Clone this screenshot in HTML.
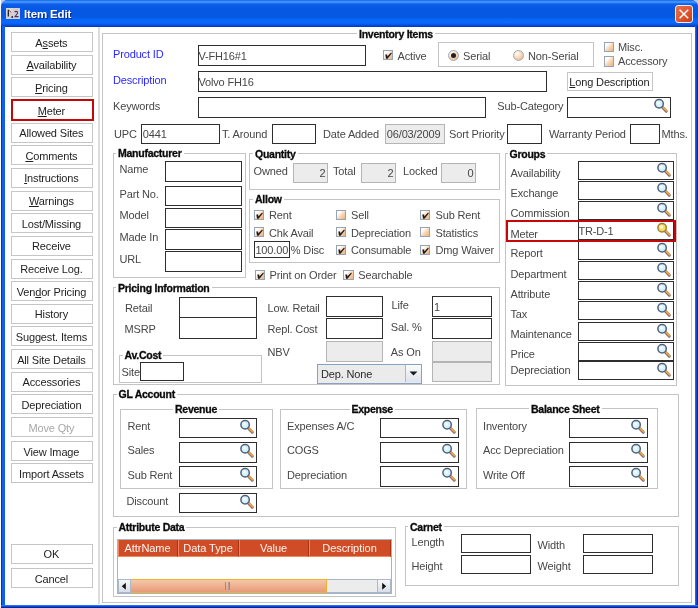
<!DOCTYPE html><html><head><meta charset="utf-8"><style>
*{box-sizing:border-box;margin:0;padding:0}
html,body{width:698px;height:608px;overflow:hidden;background:#fdfdfd;font-family:"Liberation Sans",sans-serif}
.t,.gt{position:absolute;white-space:pre;line-height:1}
#w{position:absolute;left:0;top:0;width:698px;height:608px;will-change:transform}
.gt{font-weight:bold;color:#0a0a0a;background:#fff;padding:0 2px;letter-spacing:-0.25px;-webkit-text-stroke:0.3px #0a0a0a}
.f,.fg{position:absolute;border:1px solid #2e2e2e;background:#fff;font-size:11px;line-height:1;white-space:pre;letter-spacing:-0.15px}
.fg{border:1px solid #b4b4b4;background:#ececec}
.g{position:absolute;border:1px solid #c4c4c4}
.mag{position:absolute;right:0px;top:0px}
.cb{position:absolute;width:10.4px;height:10.2px;border:1px solid #94a4b4;background:linear-gradient(135deg,#ffffff 0%,#ffffff 25%,#f8d8b8 55%,#f0b078 100%)}
.rb{position:absolute;width:11px;height:11px;border-radius:50%;border:1px solid #a0acb8;background:radial-gradient(circle at 35% 30%,#fff 0%,#f8d6b4 50%,#eea878 100%)}
.bt{position:absolute;border:1px solid #c6c6c6;background:#fff;font-size:11px;line-height:1;text-align:center;white-space:pre;letter-spacing:-0.15px}
.bt.red{border:2px solid #c40808}
u{text-decoration:underline;text-underline-offset:1px}
</style></head><body><div id="w"><div style="position:absolute;left:1px;top:0px;width:8px;height:8px;background:#b4c8f0"></div>
<div style="position:absolute;left:690px;top:0px;width:8px;height:8px;background:#b4c8f0"></div>
<div style="position:absolute;left:1px;top:0;width:697px;height:608px;background:#0a56e4;border-radius:7px 7px 0 0"></div>
<div style="position:absolute;left:1px;top:0;width:697px;height:27px;border-radius:7px 7px 0 0;background:linear-gradient(to bottom,#0a4cdc 0px,#3d95ff 1px,#3a8ffc 2.5px,#1a6cf2 3.5px,#0a5ae6 5px,#0558e2 10px,#0558e2 17px,#0866f8 20px,#0a68fa 23px,#0850e0 25px,#003cc4 26.5px)"></div>
<div style="position:absolute;left:1px;top:26px;width:1px;height:582px;background:#0a2cc8"></div>
<div style="position:absolute;left:2px;top:26px;width:3px;height:582px;background:#1060ee"></div>
<div style="position:absolute;left:694.7px;top:26px;width:1.3px;height:582px;background:#1a64f0"></div>
<div style="position:absolute;left:696px;top:26px;width:1px;height:582px;background:#0a48d8"></div>
<div style="position:absolute;left:697px;top:26px;width:1px;height:582px;background:#0022a8"></div>
<div style="position:absolute;left:1px;top:605px;width:697px;height:1px;background:#2a74f4"></div>
<div style="position:absolute;left:1px;top:606px;width:697px;height:1px;background:#0a48d8"></div>
<div style="position:absolute;left:1px;top:607px;width:697px;height:1px;background:#0026b0"></div>
<div style="position:absolute;left:5px;top:26.5px;width:689.7px;height:578.5px;background:#fff"></div>
<svg width="14" height="11" viewBox="0 0 14 11" style="position:absolute;left:6px;top:8px"><rect x="0" y="0" width="14" height="11" fill="#d6ccd4"/><rect x="0" y="0" width="7" height="5" fill="#dcd8cc"/><rect x="7" y="5" width="7" height="6" fill="#cdd4dc"/><path d="M2.3 1.8 V8.5" stroke="#141414" stroke-width="1.2"/><path d="M3.5 2.5 L5 4.5" stroke="#705060" stroke-width="1"/><circle cx="6.2" cy="9" r="0.9" fill="#202034"/><path d="M8.6 4.2 Q10 2.6 11.5 4 Q12 5.4 10.2 7 L9 8.6 H12.6" fill="none" stroke="#603048" stroke-width="1.1"/></svg>
<div class="t" style="left:24px;top:8.97px;font-size:11.5px;color:#fff;letter-spacing:-0.15px;font-weight:bold;text-shadow:1px 1px 0 #0a2a90;">Item Edit</div>
<div style="position:absolute;left:675px;top:5px;width:18px;height:18px;border:1px solid #e8eefa;border-radius:3px;background:linear-gradient(135deg,#e8704c 0%,#e05830 50%,#c83c14 100%)"><svg width="16" height="16" viewBox="0 0 16 16" style="position:absolute;left:0;top:0"><path d="M3.6 3.8 L12.2 12.2 M12.2 3.8 L3.6 12.2" stroke="#fff" stroke-width="1.5"/></svg></div>
<div style="position:absolute;left:98px;top:26.5px;width:1.8px;height:577.5px;background:#dcdcdc"></div>
<div class="bt" style="left:11px;top:32.0px;width:82px;height:20px;color:#1e1e1e"><span style="position:absolute;left:-0.6px;right:0.6px;top:4.59px">A<u>s</u>sets</span></div>
<div class="bt" style="left:11px;top:54.65px;width:82px;height:20px;color:#1e1e1e"><span style="position:absolute;left:-0.6px;right:0.6px;top:4.59px"><u>A</u>vailability</span></div>
<div class="bt" style="left:11px;top:77.3px;width:82px;height:20px;color:#1e1e1e"><span style="position:absolute;left:-0.6px;right:0.6px;top:4.59px"><u>P</u>ricing</span></div>
<div class="bt red" style="left:10.5px;top:99px;width:83px;height:22px;color:#1e1e1e"><span style="position:absolute;left:-0.6px;right:0.6px;top:5.19px"><u>M</u>eter</span></div>
<div class="bt" style="left:11px;top:122.6px;width:82px;height:20px;color:#1e1e1e"><span style="position:absolute;left:-0.6px;right:0.6px;top:4.59px">Allowed Sites</span></div>
<div class="bt" style="left:11px;top:145.25px;width:82px;height:20px;color:#1e1e1e"><span style="position:absolute;left:-0.6px;right:0.6px;top:4.59px"><u>C</u>omments</span></div>
<div class="bt" style="left:11px;top:167.9px;width:82px;height:20px;color:#1e1e1e"><span style="position:absolute;left:-0.6px;right:0.6px;top:4.59px"><u>I</u>nstructions</span></div>
<div class="bt" style="left:11px;top:190.55px;width:82px;height:20px;color:#1e1e1e"><span style="position:absolute;left:-0.6px;right:0.6px;top:4.59px"><u>W</u>arnings</span></div>
<div class="bt" style="left:11px;top:213.2px;width:82px;height:20px;color:#1e1e1e"><span style="position:absolute;left:-0.6px;right:0.6px;top:4.59px">Lost/Missing</span></div>
<div class="bt" style="left:11px;top:235.85px;width:82px;height:20px;color:#1e1e1e"><span style="position:absolute;left:-0.6px;right:0.6px;top:4.59px">Receive</span></div>
<div class="bt" style="left:11px;top:258.5px;width:82px;height:20px;color:#1e1e1e"><span style="position:absolute;left:-0.6px;right:0.6px;top:4.59px">Receive Log.</span></div>
<div class="bt" style="left:11px;top:281.15px;width:82px;height:20px;color:#1e1e1e"><span style="position:absolute;left:-0.6px;right:0.6px;top:4.59px">Ven<u>d</u>or Pricing</span></div>
<div class="bt" style="left:11px;top:303.8px;width:82px;height:20px;color:#1e1e1e"><span style="position:absolute;left:-0.6px;right:0.6px;top:4.59px">History</span></div>
<div class="bt" style="left:11px;top:326.45px;width:82px;height:20px;color:#1e1e1e"><span style="position:absolute;left:-0.6px;right:0.6px;top:4.59px">Suggest. Items</span></div>
<div class="bt" style="left:11px;top:349.1px;width:82px;height:20px;color:#1e1e1e"><span style="position:absolute;left:-0.6px;right:0.6px;top:4.59px">All Site Details</span></div>
<div class="bt" style="left:11px;top:371.75px;width:82px;height:20px;color:#1e1e1e"><span style="position:absolute;left:-0.6px;right:0.6px;top:4.59px">Accessories</span></div>
<div class="bt" style="left:11px;top:394.4px;width:82px;height:20px;color:#1e1e1e"><span style="position:absolute;left:-0.6px;right:0.6px;top:4.59px">Depreciation</span></div>
<div class="bt" style="left:11px;top:417.05px;width:82px;height:20px;color:#a8a8a8"><span style="position:absolute;left:-0.6px;right:0.6px;top:4.59px">Move Qty</span></div>
<div class="bt" style="left:11px;top:441px;width:82px;height:20px;color:#1e1e1e"><span style="position:absolute;left:-0.6px;right:0.6px;top:4.59px">View Image</span></div>
<div class="bt" style="left:11px;top:463.3px;width:82px;height:20px;color:#1e1e1e"><span style="position:absolute;left:-0.6px;right:0.6px;top:4.59px">Import Assets</span></div>
<div class="bt" style="left:11px;top:543.7px;width:82px;height:20px;color:#1e1e1e"><span style="position:absolute;left:-0.6px;right:0.6px;top:4.59px">OK</span></div>
<div class="bt" style="left:11px;top:568px;width:82px;height:20px;color:#1e1e1e"><span style="position:absolute;left:-0.6px;right:0.6px;top:4.59px">Cancel</span></div>
<div class="g" style="left:102px;top:33px;width:590px;height:570px"></div>
<div class="gt" style="left:357px;top:28.51px;font-size:10.5px">Inventory Items</div>
<div class="t" style="left:113px;top:48.59px;font-size:11px;color:#2a2aff;letter-spacing:-0.15px;">Product ID</div>
<div class="f" style="left:198px;top:45px;width:168px;height:21px"><span style="position:absolute;left:-0.6px;top:5.1px;color:#474747">V-FH16#1</span></div>
<div class="cb" style="left:383px;top:50px"><svg width="10.4" height="10.2" viewBox="0 0 10.4 10.2" style="position:absolute;left:-1px;top:-1px"><path d="M2.3 4.5 L4.1 4.5 L4.4 6.5 L8.1 2.6 L8.8 3.6 L4.5 8.7 L3.1 8.7 Z" fill="#1a1a1a"/></svg></div>
<div class="t" style="left:397.5px;top:51.09px;font-size:11px;color:#474747;letter-spacing:-0.15px;">Active</div>
<div class="g" style="left:438px;top:41.5px;width:156px;height:25px"></div>
<div class="rb" style="left:447.7px;top:50.4px"><div style="position:absolute;left:2.5px;top:2px;width:5px;height:5px;border-radius:50%;background:#202020"></div></div>
<div class="t" style="left:463px;top:51.09px;font-size:11px;color:#474747;letter-spacing:-0.15px;">Serial</div>
<div class="rb" style="left:512.9px;top:50.4px"></div>
<div class="t" style="left:528px;top:51.09px;font-size:11px;color:#474747;letter-spacing:-0.15px;">Non-Serial</div>
<div class="cb" style="left:603.5px;top:42.3px"></div>
<div class="t" style="left:618px;top:42.19px;font-size:11px;color:#474747;letter-spacing:-0.15px;">Misc.</div>
<div class="cb" style="left:603.5px;top:56.4px"></div>
<div class="t" style="left:618px;top:55.69px;font-size:11px;color:#474747;letter-spacing:-0.15px;">Accessory</div>
<div class="t" style="left:113px;top:74.59px;font-size:11px;color:#2a2aff;letter-spacing:-0.15px;">Description</div>
<div class="f" style="left:198px;top:71px;width:349px;height:21px"><span style="position:absolute;left:-0.6px;top:5.1px;color:#474747">Volvo FH16</span></div>
<div class="bt" style="left:567px;top:71.5px;width:86px;height:19.7px;color:#1e1e1e"><span style="position:absolute;left:-0.6px;right:0.6px;top:4.59px"><u>L</u>ong Description</span></div>
<div class="t" style="left:113px;top:101.09px;font-size:11px;color:#474747;letter-spacing:-0.15px;">Keywords</div>
<div class="f" style="left:198px;top:97.2px;width:288px;height:20.7px"></div>
<div class="t" style="left:497.3px;top:101.19px;font-size:11px;color:#474747;letter-spacing:-0.15px;">Sub-Category</div>
<div class="f" style="left:567px;top:97px;width:104px;height:21px"><svg class="mag" width="16" height="16" viewBox="0 0 16 16"><line x1="8.2" y1="9" x2="12.3" y2="13.2" stroke="#7a6a78" stroke-width="3" stroke-linecap="round"/><line x1="8.8" y1="9" x2="12.7" y2="12.9" stroke="#f2a444" stroke-width="1.8" stroke-linecap="round"/><circle cx="5.1" cy="5.8" r="4.2" fill="#d4f2fc" stroke="#52607a" stroke-width="1.5"/><circle cx="4.5" cy="5" r="1.8" fill="#f0fbff"/></svg></div>
<div class="t" style="left:114px;top:128.59px;font-size:11px;color:#474747;letter-spacing:-0.15px;">UPC</div>
<div class="f" style="left:141px;top:123.5px;width:79px;height:20.5px"><span style="position:absolute;left:0.8px;top:4.8px;color:#474747">0441</span></div>
<div class="t" style="left:222px;top:128.59px;font-size:11px;color:#474747;letter-spacing:-0.15px;">T. Around</div>
<div class="f" style="left:272px;top:123.5px;width:44px;height:20.5px"></div>
<div class="t" style="left:323px;top:128.59px;font-size:11px;color:#474747;letter-spacing:-0.15px;">Date Added</div>
<div class="fg" style="left:385px;top:123.5px;width:60px;height:20.5px"><span style="position:absolute;left:0.8px;top:4.8px;color:#474747">06/03/2009</span></div>
<div class="t" style="left:449px;top:128.59px;font-size:11px;color:#474747;letter-spacing:-0.15px;">Sort Priority</div>
<div class="f" style="left:507px;top:123.5px;width:35px;height:20.5px"></div>
<div class="t" style="left:549px;top:128.59px;font-size:11px;color:#474747;letter-spacing:-0.15px;">Warranty Period</div>
<div class="f" style="left:629.5px;top:123.5px;width:30.5px;height:20.5px"></div>
<div class="t" style="left:661.5px;top:128.69px;font-size:11px;color:#474747;letter-spacing:-0.15px;">Mths.</div>
<div class="g" style="left:112.6px;top:152.6px;width:133.2px;height:125px"></div>
<div class="gt" style="left:116px;top:148.11px;font-size:10.5px">Manufacturer</div>
<div class="t" style="left:119.5px;top:163.69px;font-size:11px;color:#474747;letter-spacing:-0.15px;">Name</div>
<div class="f" style="left:165px;top:161px;width:77px;height:20.5px"></div>
<div class="t" style="left:119.5px;top:188.69px;font-size:11px;color:#474747;letter-spacing:-0.15px;">Part No.</div>
<div class="f" style="left:165px;top:185.5px;width:77px;height:20.5px"></div>
<div class="t" style="left:119.5px;top:209.69px;font-size:11px;color:#474747;letter-spacing:-0.15px;">Model</div>
<div class="f" style="left:165px;top:207.5px;width:77px;height:20.5px"></div>
<div class="t" style="left:119.5px;top:231.69px;font-size:11px;color:#474747;letter-spacing:-0.15px;">Made In</div>
<div class="f" style="left:165px;top:229px;width:77px;height:20.5px"></div>
<div class="t" style="left:119.5px;top:253.69px;font-size:11px;color:#474747;letter-spacing:-0.15px;">URL</div>
<div class="f" style="left:165px;top:251px;width:77px;height:20.5px"></div>
<div class="g" style="left:249.4px;top:153.4px;width:250.6px;height:37px"></div>
<div class="gt" style="left:253px;top:148.91px;font-size:10.5px">Quantity</div>
<div class="t" style="left:253.5px;top:165.69px;font-size:11px;color:#474747;letter-spacing:-0.15px;">Owned</div>
<div class="fg" style="left:293px;top:162.7px;width:35px;height:20.5px"><span style="position:absolute;right:1.5px;top:4.8px;color:#474747">2</span></div>
<div class="t" style="left:333px;top:165.69px;font-size:11px;color:#474747;letter-spacing:-0.15px;">Total</div>
<div class="fg" style="left:361px;top:162.7px;width:35px;height:20.5px"><span style="position:absolute;right:1.5px;top:4.8px;color:#474747">2</span></div>
<div class="t" style="left:403px;top:165.69px;font-size:11px;color:#474747;letter-spacing:-0.15px;">Locked</div>
<div class="fg" style="left:441px;top:162.7px;width:35px;height:20.5px"><span style="position:absolute;right:1.5px;top:4.8px;color:#474747">0</span></div>
<div class="g" style="left:249.4px;top:198.5px;width:250.8px;height:64px"></div>
<div class="gt" style="left:253px;top:194.01px;font-size:10.5px">Allow</div>
<div class="cb" style="left:253.7px;top:209.6px"><svg width="10.4" height="10.2" viewBox="0 0 10.4 10.2" style="position:absolute;left:-1px;top:-1px"><path d="M2.3 4.5 L4.1 4.5 L4.4 6.5 L8.1 2.6 L8.8 3.6 L4.5 8.7 L3.1 8.7 Z" fill="#1a1a1a"/></svg></div>
<div class="t" style="left:269px;top:210.19px;font-size:11px;color:#474747;letter-spacing:-0.15px;">Rent</div>
<div class="cb" style="left:336px;top:209.6px"></div>
<div class="t" style="left:351px;top:210.19px;font-size:11px;color:#474747;letter-spacing:-0.15px;">Sell</div>
<div class="cb" style="left:420px;top:209.6px"><svg width="10.4" height="10.2" viewBox="0 0 10.4 10.2" style="position:absolute;left:-1px;top:-1px"><path d="M2.3 4.5 L4.1 4.5 L4.4 6.5 L8.1 2.6 L8.8 3.6 L4.5 8.7 L3.1 8.7 Z" fill="#1a1a1a"/></svg></div>
<div class="t" style="left:435.5px;top:210.19px;font-size:11px;color:#474747;letter-spacing:-0.15px;">Sub Rent</div>
<div class="cb" style="left:253.7px;top:227.2px"><svg width="10.4" height="10.2" viewBox="0 0 10.4 10.2" style="position:absolute;left:-1px;top:-1px"><path d="M2.3 4.5 L4.1 4.5 L4.4 6.5 L8.1 2.6 L8.8 3.6 L4.5 8.7 L3.1 8.7 Z" fill="#1a1a1a"/></svg></div>
<div class="t" style="left:269px;top:227.69px;font-size:11px;color:#474747;letter-spacing:-0.15px;">Chk Avail</div>
<div class="cb" style="left:336px;top:227.2px"><svg width="10.4" height="10.2" viewBox="0 0 10.4 10.2" style="position:absolute;left:-1px;top:-1px"><path d="M2.3 4.5 L4.1 4.5 L4.4 6.5 L8.1 2.6 L8.8 3.6 L4.5 8.7 L3.1 8.7 Z" fill="#1a1a1a"/></svg></div>
<div class="t" style="left:351px;top:227.69px;font-size:11px;color:#474747;letter-spacing:-0.15px;">Depreciation</div>
<div class="cb" style="left:420px;top:227.2px"></div>
<div class="t" style="left:435.5px;top:227.69px;font-size:11px;color:#474747;letter-spacing:-0.15px;">Statistics</div>
<div class="f" style="left:253.6px;top:241px;width:36.6px;height:17px"><span style="position:absolute;left:0.8px;top:3.1px;color:#474747">100.00</span></div>
<div class="t" style="left:290.8px;top:245.49px;font-size:11px;color:#474747;letter-spacing:-0.15px;">% Disc</div>
<div class="cb" style="left:336px;top:244.8px"><svg width="10.4" height="10.2" viewBox="0 0 10.4 10.2" style="position:absolute;left:-1px;top:-1px"><path d="M2.3 4.5 L4.1 4.5 L4.4 6.5 L8.1 2.6 L8.8 3.6 L4.5 8.7 L3.1 8.7 Z" fill="#1a1a1a"/></svg></div>
<div class="t" style="left:351px;top:245.19px;font-size:11px;color:#474747;letter-spacing:-0.15px;">Consumable</div>
<div class="cb" style="left:420px;top:244.8px"><svg width="10.4" height="10.2" viewBox="0 0 10.4 10.2" style="position:absolute;left:-1px;top:-1px"><path d="M2.3 4.5 L4.1 4.5 L4.4 6.5 L8.1 2.6 L8.8 3.6 L4.5 8.7 L3.1 8.7 Z" fill="#1a1a1a"/></svg></div>
<div class="t" style="left:435.5px;top:245.19px;font-size:11px;color:#474747;letter-spacing:-0.15px;">Dmg Waiver</div>
<div class="cb" style="left:255px;top:270px"><svg width="10.4" height="10.2" viewBox="0 0 10.4 10.2" style="position:absolute;left:-1px;top:-1px"><path d="M2.3 4.5 L4.1 4.5 L4.4 6.5 L8.1 2.6 L8.8 3.6 L4.5 8.7 L3.1 8.7 Z" fill="#1a1a1a"/></svg></div>
<div class="t" style="left:269.5px;top:269.69px;font-size:11px;color:#474747;letter-spacing:-0.15px;">Print on Order</div>
<div class="cb" style="left:343.3px;top:270px"><svg width="10.4" height="10.2" viewBox="0 0 10.4 10.2" style="position:absolute;left:-1px;top:-1px"><path d="M2.3 4.5 L4.1 4.5 L4.4 6.5 L8.1 2.6 L8.8 3.6 L4.5 8.7 L3.1 8.7 Z" fill="#1a1a1a"/></svg></div>
<div class="t" style="left:358.3px;top:269.89px;font-size:11px;color:#474747;letter-spacing:-0.15px;">Searchable</div>
<div class="g" style="left:504.8px;top:153px;width:172.3px;height:233px"></div>
<div class="gt" style="left:507.5px;top:148.51px;font-size:10.5px">Groups</div>
<div class="t" style="left:510.5px;top:167.89px;font-size:11px;color:#474747;letter-spacing:-0.15px;">Availability</div>
<div class="f" style="left:578px;top:161.0px;width:96px;height:19px"><svg class="mag" width="16" height="16" viewBox="0 0 16 16"><line x1="8.2" y1="9" x2="12.3" y2="13.2" stroke="#7a6a78" stroke-width="3" stroke-linecap="round"/><line x1="8.8" y1="9" x2="12.7" y2="12.9" stroke="#f2a444" stroke-width="1.8" stroke-linecap="round"/><circle cx="5.1" cy="5.8" r="4.2" fill="#d4f2fc" stroke="#52607a" stroke-width="1.5"/><circle cx="4.5" cy="5" r="1.8" fill="#f0fbff"/></svg></div>
<div class="t" style="left:510.5px;top:188.02px;font-size:11px;color:#474747;letter-spacing:-0.15px;">Exchange</div>
<div class="f" style="left:578px;top:181.07px;width:96px;height:19px"><svg class="mag" width="16" height="16" viewBox="0 0 16 16"><line x1="8.2" y1="9" x2="12.3" y2="13.2" stroke="#7a6a78" stroke-width="3" stroke-linecap="round"/><line x1="8.8" y1="9" x2="12.7" y2="12.9" stroke="#f2a444" stroke-width="1.8" stroke-linecap="round"/><circle cx="5.1" cy="5.8" r="4.2" fill="#d4f2fc" stroke="#52607a" stroke-width="1.5"/><circle cx="4.5" cy="5" r="1.8" fill="#f0fbff"/></svg></div>
<div class="t" style="left:510.5px;top:208.15px;font-size:11px;color:#474747;letter-spacing:-0.15px;">Commission</div>
<div class="f" style="left:578px;top:201.14px;width:96px;height:19px"><svg class="mag" width="16" height="16" viewBox="0 0 16 16"><line x1="8.2" y1="9" x2="12.3" y2="13.2" stroke="#7a6a78" stroke-width="3" stroke-linecap="round"/><line x1="8.8" y1="9" x2="12.7" y2="12.9" stroke="#f2a444" stroke-width="1.8" stroke-linecap="round"/><circle cx="5.1" cy="5.8" r="4.2" fill="#d4f2fc" stroke="#52607a" stroke-width="1.5"/><circle cx="4.5" cy="5" r="1.8" fill="#f0fbff"/></svg></div>
<div class="t" style="left:510.5px;top:229.08px;font-size:11px;color:#474747;letter-spacing:-0.15px;">Meter</div>
<div class="f" style="left:578px;top:221.21px;width:96px;height:19px"><span style="position:absolute;left:-0.6px;top:4.1px;color:#474747">TR-D-1</span><svg class="mag" width="16" height="16" viewBox="0 0 16 16"><line x1="8.2" y1="9" x2="12.3" y2="13.2" stroke="#7a6a78" stroke-width="3" stroke-linecap="round"/><line x1="8.8" y1="9" x2="12.7" y2="12.9" stroke="#f2a444" stroke-width="1.8" stroke-linecap="round"/><circle cx="5.1" cy="5.8" r="4.2" fill="#f4dc70" stroke="#a08030" stroke-width="1.5"/><circle cx="4.5" cy="5" r="1.8" fill="#fff8c0"/></svg></div>
<div class="t" style="left:510.5px;top:248.41px;font-size:11px;color:#474747;letter-spacing:-0.15px;">Report</div>
<div class="f" style="left:578px;top:241.28px;width:96px;height:19px"><svg class="mag" width="16" height="16" viewBox="0 0 16 16"><line x1="8.2" y1="9" x2="12.3" y2="13.2" stroke="#7a6a78" stroke-width="3" stroke-linecap="round"/><line x1="8.8" y1="9" x2="12.7" y2="12.9" stroke="#f2a444" stroke-width="1.8" stroke-linecap="round"/><circle cx="5.1" cy="5.8" r="4.2" fill="#d4f2fc" stroke="#52607a" stroke-width="1.5"/><circle cx="4.5" cy="5" r="1.8" fill="#f0fbff"/></svg></div>
<div class="t" style="left:510.5px;top:268.54px;font-size:11px;color:#474747;letter-spacing:-0.15px;">Department</div>
<div class="f" style="left:578px;top:261.35px;width:96px;height:19px"><svg class="mag" width="16" height="16" viewBox="0 0 16 16"><line x1="8.2" y1="9" x2="12.3" y2="13.2" stroke="#7a6a78" stroke-width="3" stroke-linecap="round"/><line x1="8.8" y1="9" x2="12.7" y2="12.9" stroke="#f2a444" stroke-width="1.8" stroke-linecap="round"/><circle cx="5.1" cy="5.8" r="4.2" fill="#d4f2fc" stroke="#52607a" stroke-width="1.5"/><circle cx="4.5" cy="5" r="1.8" fill="#f0fbff"/></svg></div>
<div class="t" style="left:510.5px;top:288.67px;font-size:11px;color:#474747;letter-spacing:-0.15px;">Attribute</div>
<div class="f" style="left:578px;top:281.42px;width:96px;height:19px"><svg class="mag" width="16" height="16" viewBox="0 0 16 16"><line x1="8.2" y1="9" x2="12.3" y2="13.2" stroke="#7a6a78" stroke-width="3" stroke-linecap="round"/><line x1="8.8" y1="9" x2="12.7" y2="12.9" stroke="#f2a444" stroke-width="1.8" stroke-linecap="round"/><circle cx="5.1" cy="5.8" r="4.2" fill="#d4f2fc" stroke="#52607a" stroke-width="1.5"/><circle cx="4.5" cy="5" r="1.8" fill="#f0fbff"/></svg></div>
<div class="t" style="left:510.5px;top:308.80px;font-size:11px;color:#474747;letter-spacing:-0.15px;">Tax</div>
<div class="f" style="left:578px;top:301.49px;width:96px;height:19px"><svg class="mag" width="16" height="16" viewBox="0 0 16 16"><line x1="8.2" y1="9" x2="12.3" y2="13.2" stroke="#7a6a78" stroke-width="3" stroke-linecap="round"/><line x1="8.8" y1="9" x2="12.7" y2="12.9" stroke="#f2a444" stroke-width="1.8" stroke-linecap="round"/><circle cx="5.1" cy="5.8" r="4.2" fill="#d4f2fc" stroke="#52607a" stroke-width="1.5"/><circle cx="4.5" cy="5" r="1.8" fill="#f0fbff"/></svg></div>
<div class="t" style="left:510.5px;top:328.93px;font-size:11px;color:#474747;letter-spacing:-0.15px;">Maintenance</div>
<div class="f" style="left:578px;top:321.56px;width:96px;height:19px"><svg class="mag" width="16" height="16" viewBox="0 0 16 16"><line x1="8.2" y1="9" x2="12.3" y2="13.2" stroke="#7a6a78" stroke-width="3" stroke-linecap="round"/><line x1="8.8" y1="9" x2="12.7" y2="12.9" stroke="#f2a444" stroke-width="1.8" stroke-linecap="round"/><circle cx="5.1" cy="5.8" r="4.2" fill="#d4f2fc" stroke="#52607a" stroke-width="1.5"/><circle cx="4.5" cy="5" r="1.8" fill="#f0fbff"/></svg></div>
<div class="t" style="left:510.5px;top:349.06px;font-size:11px;color:#474747;letter-spacing:-0.15px;">Price</div>
<div class="f" style="left:578px;top:341.63px;width:96px;height:19px"><svg class="mag" width="16" height="16" viewBox="0 0 16 16"><line x1="8.2" y1="9" x2="12.3" y2="13.2" stroke="#7a6a78" stroke-width="3" stroke-linecap="round"/><line x1="8.8" y1="9" x2="12.7" y2="12.9" stroke="#f2a444" stroke-width="1.8" stroke-linecap="round"/><circle cx="5.1" cy="5.8" r="4.2" fill="#d4f2fc" stroke="#52607a" stroke-width="1.5"/><circle cx="4.5" cy="5" r="1.8" fill="#f0fbff"/></svg></div>
<div class="t" style="left:510.5px;top:365.09px;font-size:11px;color:#474747;letter-spacing:-0.15px;">Depreciation</div>
<div class="f" style="left:578px;top:360.7px;width:96px;height:19px"><svg class="mag" width="16" height="16" viewBox="0 0 16 16"><line x1="8.2" y1="9" x2="12.3" y2="13.2" stroke="#7a6a78" stroke-width="3" stroke-linecap="round"/><line x1="8.8" y1="9" x2="12.7" y2="12.9" stroke="#f2a444" stroke-width="1.8" stroke-linecap="round"/><circle cx="5.1" cy="5.8" r="4.2" fill="#d4f2fc" stroke="#52607a" stroke-width="1.5"/><circle cx="4.5" cy="5" r="1.8" fill="#f0fbff"/></svg></div>
<div style="position:absolute;left:506.2px;top:219.8px;width:169.6px;height:21.9px;border:2px solid #c40808"></div>
<div class="g" style="left:113px;top:287.2px;width:387px;height:97.8px"></div>
<div class="gt" style="left:116px;top:282.71px;font-size:10.5px">Pricing Information</div>
<div class="t" style="left:125px;top:302.69px;font-size:11px;color:#474747;letter-spacing:-0.15px;">Retail</div>
<div class="f" style="left:179px;top:296.5px;width:78px;height:21px"></div>
<div class="t" style="left:124.5px;top:323.69px;font-size:11px;color:#474747;letter-spacing:-0.15px;">MSRP</div>
<div class="f" style="left:179px;top:317.4px;width:78px;height:21.5px"></div>
<div class="g" style="left:119px;top:354.9px;width:143.3px;height:27.8px"></div>
<div class="gt" style="left:122.5px;top:350.41px;font-size:10.5px">Av.Cost</div>
<div class="t" style="left:121.5px;top:366.69px;font-size:11px;color:#474747;letter-spacing:-0.15px;">Site</div>
<div class="f" style="left:140px;top:362px;width:44px;height:19px"></div>
<div class="t" style="left:267.5px;top:302.89px;font-size:11px;color:#474747;letter-spacing:-0.15px;">Low. Retail</div>
<div class="f" style="left:326px;top:296px;width:57px;height:21px"></div>
<div class="t" style="left:267.5px;top:324.29px;font-size:11px;color:#474747;letter-spacing:-0.15px;">Repl. Cost</div>
<div class="f" style="left:326px;top:318px;width:57px;height:21px"></div>
<div class="t" style="left:267.5px;top:347.09px;font-size:11px;color:#474747;letter-spacing:-0.15px;">NBV</div>
<div class="fg" style="left:326px;top:341px;width:57px;height:21px"></div>
<div class="t" style="left:391.5px;top:299.69px;font-size:11px;color:#474747;letter-spacing:-0.15px;">Life</div>
<div class="f" style="left:432.2px;top:296px;width:59.8px;height:21px"><span style="position:absolute;left:0.8px;top:5.1px;color:#474747">1</span></div>
<div class="t" style="left:390.8px;top:321.69px;font-size:11px;color:#474747;letter-spacing:-0.15px;">Sal. %</div>
<div class="f" style="left:432.2px;top:318px;width:59.8px;height:21px"></div>
<div class="t" style="left:390.8px;top:346.99px;font-size:11px;color:#474747;letter-spacing:-0.15px;">As On</div>
<div class="fg" style="left:432.2px;top:341px;width:59.8px;height:21px"></div>
<div class="fg" style="left:432.2px;top:361.5px;width:59.8px;height:20px"></div>
<div style="position:absolute;left:317px;top:364px;width:104.5px;height:19.7px;border:1px solid #8aa0c0;background:#ebebeb"><span class="t" style="left:3px;top:3.5px;font-size:11px;color:#2a2a2a;letter-spacing:-0.15px">Dep. None</span><div style="position:absolute;right:0;top:0;width:16px;height:17px;border-left:1px solid #a8b8d0;background:linear-gradient(#fafafa,#dde3ec)"><svg width="15" height="17" viewBox="0 0 15 17" style="position:absolute;left:0;top:0"><path d="M3.5 6.5 L11.5 6.5 L7.5 10.5 Z" fill="#1a1a1a"/></svg></div></div>
<div class="g" style="left:113px;top:393.8px;width:565.8px;height:123.6px"></div>
<div class="gt" style="left:116.5px;top:389.31px;font-size:10.5px">GL Account</div>
<div class="g" style="left:120.3px;top:408.7px;width:152.4px;height:80.3px"></div>
<div class="gt" style="left:173px;top:404.21px;font-size:10.5px">Revenue</div>
<div class="t" style="left:127.5px;top:421.09px;font-size:11px;color:#474747;letter-spacing:-0.15px;">Rent</div>
<div class="f" style="left:178.7px;top:417.9px;width:78.5px;height:20.5px"><svg class="mag" width="16" height="16" viewBox="0 0 16 16"><line x1="8.2" y1="9" x2="12.3" y2="13.2" stroke="#7a6a78" stroke-width="3" stroke-linecap="round"/><line x1="8.8" y1="9" x2="12.7" y2="12.9" stroke="#f2a444" stroke-width="1.8" stroke-linecap="round"/><circle cx="5.1" cy="5.8" r="4.2" fill="#d4f2fc" stroke="#52607a" stroke-width="1.5"/><circle cx="4.5" cy="5" r="1.8" fill="#f0fbff"/></svg></div>
<div class="t" style="left:127.5px;top:445.19px;font-size:11px;color:#474747;letter-spacing:-0.15px;">Sales</div>
<div class="f" style="left:178.7px;top:442px;width:78.5px;height:20.5px"><svg class="mag" width="16" height="16" viewBox="0 0 16 16"><line x1="8.2" y1="9" x2="12.3" y2="13.2" stroke="#7a6a78" stroke-width="3" stroke-linecap="round"/><line x1="8.8" y1="9" x2="12.7" y2="12.9" stroke="#f2a444" stroke-width="1.8" stroke-linecap="round"/><circle cx="5.1" cy="5.8" r="4.2" fill="#d4f2fc" stroke="#52607a" stroke-width="1.5"/><circle cx="4.5" cy="5" r="1.8" fill="#f0fbff"/></svg></div>
<div class="t" style="left:127.5px;top:469.59px;font-size:11px;color:#474747;letter-spacing:-0.15px;">Sub Rent</div>
<div class="f" style="left:178.7px;top:466.4px;width:78.5px;height:20.5px"><svg class="mag" width="16" height="16" viewBox="0 0 16 16"><line x1="8.2" y1="9" x2="12.3" y2="13.2" stroke="#7a6a78" stroke-width="3" stroke-linecap="round"/><line x1="8.8" y1="9" x2="12.7" y2="12.9" stroke="#f2a444" stroke-width="1.8" stroke-linecap="round"/><circle cx="5.1" cy="5.8" r="4.2" fill="#d4f2fc" stroke="#52607a" stroke-width="1.5"/><circle cx="4.5" cy="5" r="1.8" fill="#f0fbff"/></svg></div>
<div class="t" style="left:126.5px;top:496.49px;font-size:11px;color:#474747;letter-spacing:-0.15px;">Discount</div>
<div class="f" style="left:178.7px;top:492.8px;width:78.5px;height:20.7px"><svg class="mag" width="16" height="16" viewBox="0 0 16 16"><line x1="8.2" y1="9" x2="12.3" y2="13.2" stroke="#7a6a78" stroke-width="3" stroke-linecap="round"/><line x1="8.8" y1="9" x2="12.7" y2="12.9" stroke="#f2a444" stroke-width="1.8" stroke-linecap="round"/><circle cx="5.1" cy="5.8" r="4.2" fill="#d4f2fc" stroke="#52607a" stroke-width="1.5"/><circle cx="4.5" cy="5" r="1.8" fill="#f0fbff"/></svg></div>
<div class="g" style="left:280px;top:408.7px;width:187px;height:80.3px"></div>
<div class="gt" style="left:349.5px;top:404.21px;font-size:10.5px">Expense</div>
<div class="t" style="left:287px;top:421.09px;font-size:11px;color:#474747;letter-spacing:-0.15px;">Expenses A/C</div>
<div class="f" style="left:380.2px;top:417.9px;width:78.5px;height:20.5px"><svg class="mag" width="16" height="16" viewBox="0 0 16 16"><line x1="8.2" y1="9" x2="12.3" y2="13.2" stroke="#7a6a78" stroke-width="3" stroke-linecap="round"/><line x1="8.8" y1="9" x2="12.7" y2="12.9" stroke="#f2a444" stroke-width="1.8" stroke-linecap="round"/><circle cx="5.1" cy="5.8" r="4.2" fill="#d4f2fc" stroke="#52607a" stroke-width="1.5"/><circle cx="4.5" cy="5" r="1.8" fill="#f0fbff"/></svg></div>
<div class="t" style="left:287px;top:445.19px;font-size:11px;color:#474747;letter-spacing:-0.15px;">COGS</div>
<div class="f" style="left:380.2px;top:442px;width:78.5px;height:20.5px"><svg class="mag" width="16" height="16" viewBox="0 0 16 16"><line x1="8.2" y1="9" x2="12.3" y2="13.2" stroke="#7a6a78" stroke-width="3" stroke-linecap="round"/><line x1="8.8" y1="9" x2="12.7" y2="12.9" stroke="#f2a444" stroke-width="1.8" stroke-linecap="round"/><circle cx="5.1" cy="5.8" r="4.2" fill="#d4f2fc" stroke="#52607a" stroke-width="1.5"/><circle cx="4.5" cy="5" r="1.8" fill="#f0fbff"/></svg></div>
<div class="t" style="left:287px;top:469.59px;font-size:11px;color:#474747;letter-spacing:-0.15px;">Depreciation</div>
<div class="f" style="left:380.2px;top:466.4px;width:78.5px;height:20.5px"><svg class="mag" width="16" height="16" viewBox="0 0 16 16"><line x1="8.2" y1="9" x2="12.3" y2="13.2" stroke="#7a6a78" stroke-width="3" stroke-linecap="round"/><line x1="8.8" y1="9" x2="12.7" y2="12.9" stroke="#f2a444" stroke-width="1.8" stroke-linecap="round"/><circle cx="5.1" cy="5.8" r="4.2" fill="#d4f2fc" stroke="#52607a" stroke-width="1.5"/><circle cx="4.5" cy="5" r="1.8" fill="#f0fbff"/></svg></div>
<div class="g" style="left:476.3px;top:408.2px;width:182.2px;height:81px"></div>
<div class="gt" style="left:529px;top:403.71px;font-size:10.5px">Balance Sheet</div>
<div class="t" style="left:483px;top:421.09px;font-size:11px;color:#474747;letter-spacing:-0.15px;">Inventory</div>
<div class="f" style="left:569.3px;top:417.9px;width:78.3px;height:20.5px"><svg class="mag" width="16" height="16" viewBox="0 0 16 16"><line x1="8.2" y1="9" x2="12.3" y2="13.2" stroke="#7a6a78" stroke-width="3" stroke-linecap="round"/><line x1="8.8" y1="9" x2="12.7" y2="12.9" stroke="#f2a444" stroke-width="1.8" stroke-linecap="round"/><circle cx="5.1" cy="5.8" r="4.2" fill="#d4f2fc" stroke="#52607a" stroke-width="1.5"/><circle cx="4.5" cy="5" r="1.8" fill="#f0fbff"/></svg></div>
<div class="t" style="left:483px;top:445.19px;font-size:11px;color:#474747;letter-spacing:-0.15px;">Acc Depreciation</div>
<div class="f" style="left:569.3px;top:442px;width:78.3px;height:20.5px"><svg class="mag" width="16" height="16" viewBox="0 0 16 16"><line x1="8.2" y1="9" x2="12.3" y2="13.2" stroke="#7a6a78" stroke-width="3" stroke-linecap="round"/><line x1="8.8" y1="9" x2="12.7" y2="12.9" stroke="#f2a444" stroke-width="1.8" stroke-linecap="round"/><circle cx="5.1" cy="5.8" r="4.2" fill="#d4f2fc" stroke="#52607a" stroke-width="1.5"/><circle cx="4.5" cy="5" r="1.8" fill="#f0fbff"/></svg></div>
<div class="t" style="left:483px;top:469.59px;font-size:11px;color:#474747;letter-spacing:-0.15px;">Write Off</div>
<div class="f" style="left:569.3px;top:466.4px;width:78.3px;height:20.5px"><svg class="mag" width="16" height="16" viewBox="0 0 16 16"><line x1="8.2" y1="9" x2="12.3" y2="13.2" stroke="#7a6a78" stroke-width="3" stroke-linecap="round"/><line x1="8.8" y1="9" x2="12.7" y2="12.9" stroke="#f2a444" stroke-width="1.8" stroke-linecap="round"/><circle cx="5.1" cy="5.8" r="4.2" fill="#d4f2fc" stroke="#52607a" stroke-width="1.5"/><circle cx="4.5" cy="5" r="1.8" fill="#f0fbff"/></svg></div>
<div class="g" style="left:112.5px;top:526.5px;width:283px;height:70px"></div>
<div class="gt" style="left:116.5px;top:522.01px;font-size:10.5px">Attribute Data</div>
<div style="position:absolute;left:116.5px;top:539px;width:275px;height:55px;border:1px solid #a4b4c4;background:#fff"></div>
<div style="position:absolute;left:117.5px;top:540px;width:60.0px;height:16.5px;background:#cf4c26;border-left:1px solid #ee8462;border-right:1px solid #a83414;border-bottom:1px solid #f08a5a;color:#fff4f0;font-size:11px;line-height:16px;text-align:center;letter-spacing:-0.05px">AttrName</div>
<div style="position:absolute;left:177.5px;top:540px;width:61.0px;height:16.5px;background:#cf4c26;border-left:1px solid #ee8462;border-right:1px solid #a83414;border-bottom:1px solid #f08a5a;color:#fff4f0;font-size:11px;line-height:16px;text-align:center;letter-spacing:-0.05px">Data Type</div>
<div style="position:absolute;left:238.5px;top:540px;width:70.0px;height:16.5px;background:#cf4c26;border-left:1px solid #ee8462;border-right:1px solid #a83414;border-bottom:1px solid #f08a5a;color:#fff4f0;font-size:11px;line-height:16px;text-align:center;letter-spacing:-0.05px">Value</div>
<div style="position:absolute;left:308.5px;top:540px;width:82.0px;height:16.5px;background:#cf4c26;border-left:1px solid #ee8462;border-right:1px solid #a83414;border-bottom:1px solid #f08a5a;color:#fff4f0;font-size:11px;line-height:16px;text-align:center;letter-spacing:-0.05px">Description</div>
<div style="position:absolute;left:117.5px;top:578.5px;width:273px;height:14.5px;background:#ececec;border-top:1px solid #a8b8c8;border-bottom:1px solid #a8b8c8"></div>
<div style="position:absolute;left:117.5px;top:578.5px;width:13px;height:14.5px;background:linear-gradient(#f6f8fa,#d8dee6);border:1px solid #a8b8c8"><svg width="11" height="13" viewBox="0 0 11 13" style="position:absolute;left:0;top:0"><path d="M2.8 6.3 L6.8 2.8 L6.8 9.8 Z" fill="#111"/></svg></div>
<div style="position:absolute;left:377px;top:578.5px;width:14px;height:14.5px;background:linear-gradient(#f6f8fa,#d8dee6);border:1px solid #a8b8c8"><svg width="12" height="13" viewBox="0 0 12 13" style="position:absolute;left:0;top:0"><path d="M8.2 6.3 L4.2 2.8 L4.2 9.8 Z" fill="#111"/></svg></div>
<div style="position:absolute;left:130.5px;top:578.5px;width:196.5px;height:14.5px;border:1px solid #f2b030;border-left:none;background:linear-gradient(#f4c8a8,#e89a78)"><div style="position:absolute;left:94px;top:2.5px;width:5px;height:8px;border-left:1px solid #9a8a88;border-right:1px solid #9a8a88;background:linear-gradient(90deg,transparent 1.5px,#b0a0a0 1.5px,#b0a0a0 2.5px,transparent 2.5px)"></div></div>
<div class="g" style="left:404.5px;top:526.3px;width:274.3px;height:59.5px"></div>
<div class="gt" style="left:408px;top:521.81px;font-size:10.5px">Carnet</div>
<div class="t" style="left:411.5px;top:537.19px;font-size:11px;color:#474747;letter-spacing:-0.15px;">Length</div>
<div class="f" style="left:461px;top:534.2px;width:70px;height:18.8px"></div>
<div class="t" style="left:537.5px;top:539.69px;font-size:11px;color:#474747;letter-spacing:-0.15px;">Width</div>
<div class="f" style="left:583px;top:534.2px;width:70px;height:18.8px"></div>
<div class="t" style="left:411.5px;top:560.99px;font-size:11px;color:#474747;letter-spacing:-0.15px;">Height</div>
<div class="f" style="left:461px;top:555.2px;width:70px;height:18.8px"></div>
<div class="t" style="left:537.5px;top:560.99px;font-size:11px;color:#474747;letter-spacing:-0.15px;">Weight</div>
<div class="f" style="left:583px;top:555.2px;width:70px;height:18.8px"></div></div></body></html>
